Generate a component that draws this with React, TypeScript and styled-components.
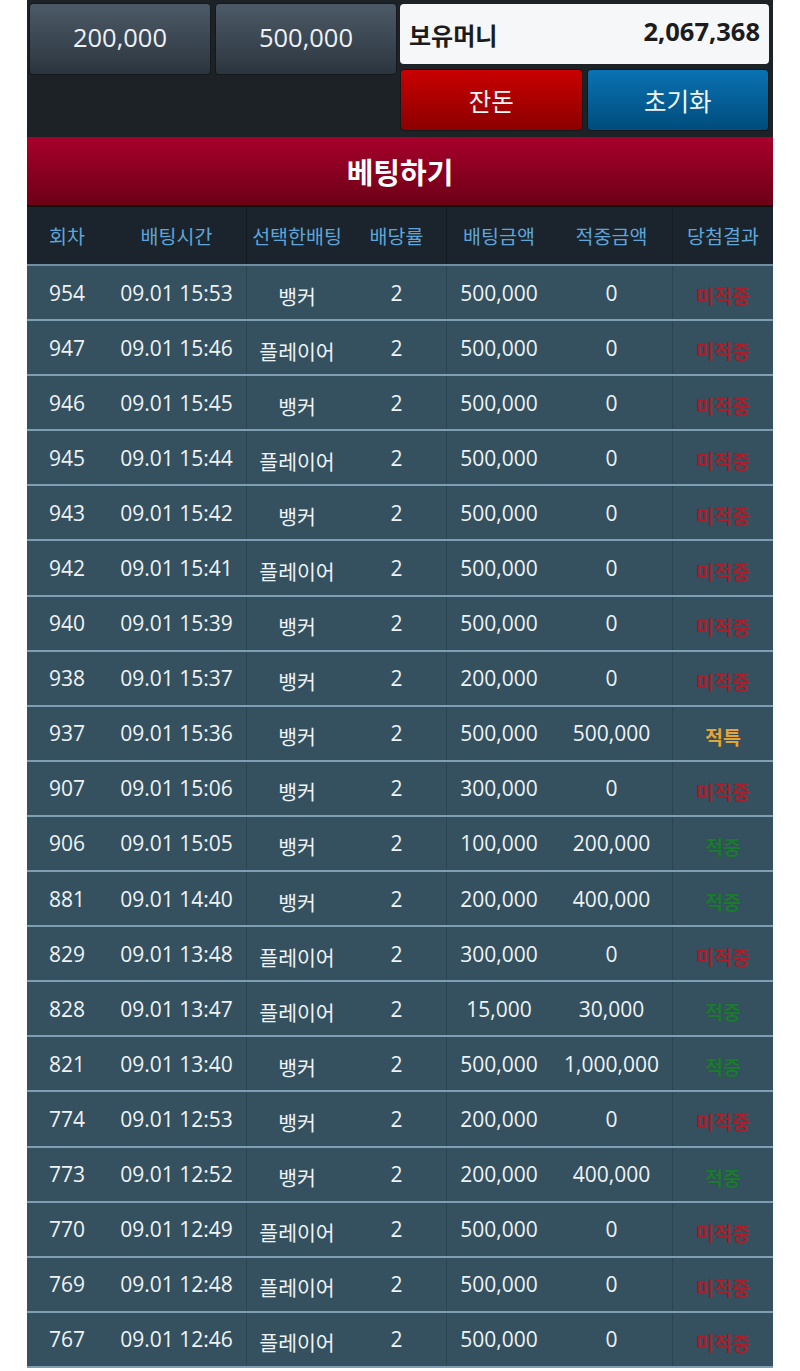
import React from "react";
import styled, { createGlobalStyle } from "styled-components";

const Global = createGlobalStyle`
  html, body { margin: 0; padding: 0; background: #ffffff; }
  body { font-family: "Open Sans", "Noto Sans CJK KR", sans-serif; }
  * { box-sizing: border-box; }
`;

const Page = styled.div`
  width: 746px;
  margin-left: 27px;
  background: #1d2226;
`;

const TopPanel = styled.div`
  display: flex;
  gap: 3px;
  padding: 3px 4px 6px 2px;
  height: 137px;
`;

const LeftGroup = styled.div`
  display: flex;
  gap: 4px;
  align-items: flex-start;
`;

const AmountButton = styled.div`
  width: 182px;
  height: 72px;
  border-radius: 4px;
  border: 1px solid #15191c;
  background: linear-gradient(#4c5a67, #2b353e);
  color: #eef2f5;
  font-size: 25.5px;
  display: flex;
  align-items: center;
  justify-content: center;
  padding-bottom: 5px;
  font-family: "Open Sans", sans-serif;
`;

const RightGroup = styled.div`
  flex: 1;
  display: flex;
  flex-direction: column;
  gap: 5px;
  padding-top: 1px;
`;

const BalanceBox = styled.div`
  height: 60px;
  border-radius: 4px;
  background: #f6f7f9;
  display: flex;
  align-items: center;
  justify-content: space-between;
  padding: 0 9px 0 9px;
  color: #1c1c1c;
  font-weight: 700;
`;

const BalanceLabel = styled.span`
  font-family: "Noto Sans CJK KR", sans-serif;
  font-size: 24px;
  font-weight: 700;
`;

const BalanceValue = styled.span`
  font-family: "Open Sans", sans-serif;
  font-size: 25.5px;
  font-weight: 700;
  margin-bottom: 6px;
`;

const ActionRow = styled.div`
  display: flex;
  gap: 4px;
`;

const ActionButton = styled.div<{ $tone: "red" | "blue" }>`
  flex: 1;
  height: 62px;
  border-radius: 4px;
  border: 1px solid #14181b;
  background: ${(p) =>
    p.$tone === "red"
      ? "linear-gradient(#c90000, #8c0000)"
      : "linear-gradient(#0a72b2, #004c7c)"};
  color: #f3f6f8;
  font-family: "Noto Sans CJK KR", sans-serif;
  font-size: 24.5px;
  display: flex;
  align-items: center;
  justify-content: center;
`;

const BetBar = styled.div`
  height: 70px;
  background: linear-gradient(#a8002b, #6c0017);
  border-bottom: 2px solid #140c0e;
  color: #ffffff;
  font-family: "Noto Sans CJK KR", sans-serif;
  font-size: 29px;
  font-weight: 700;
  display: flex;
  align-items: center;
  justify-content: center;
`;

const Table = styled.div`
  display: flex;
  flex-direction: column;
`;

const cols = "80px 140px 100px 100px 104px 122px 100px";

const HeadRow = styled.div`
  display: grid;
  grid-template-columns: ${cols};
  height: 59px;
  background: #1b242c;
  border-bottom: 2px solid #6f8ea3;
`;

const Row = styled.div`
  display: grid;
  grid-template-columns: ${cols};
  height: 55.1px;
  background: #35515f;
  border-bottom: 2px solid #7e9eb3;
`;

const Cell = styled.div<{ $sep?: boolean; $kr?: boolean }>`
  display: flex;
  align-items: center;
  justify-content: center;
  color: #eef3f6;
  font-size: ${(p) => (p.$kr ? "20.5px" : "21px")};
  font-family: ${(p) =>
    p.$kr ? '"Noto Sans CJK KR", sans-serif' : '"Open Sans", "Noto Sans CJK KR", sans-serif'};
  padding-top: ${(p) => (p.$kr ? "6px" : "0")};
  border-right: ${(p) => (p.$sep ? "1px solid #2c4350" : "none")};
  white-space: nowrap;
`;

const HeadCell = styled.div<{ $sep?: boolean }>`
  display: flex;
  align-items: center;
  justify-content: center;
  color: #5ea6da;
  font-size: 19.5px;
  font-family: "Noto Sans CJK KR", sans-serif;
  border-right: ${(p) => (p.$sep ? "1px solid #141b21" : "none")};
  white-space: nowrap;
`;

const ResultText = styled.span<{ $kind: string }>`
  font-family: "Noto Sans CJK KR", sans-serif;
  font-size: 19.5px;
  font-weight: 700;
  color: ${(p) =>
    p.$kind === "적특" ? "#e3a538" : p.$kind === "적중" ? "#1c7a30" : "#a8202b"};
  text-shadow: 0 0 1px rgba(0, 0, 0, 0.2);
`;

type Bet = [string, string, string, string, string, string];

const data: Bet[] = [
  ["954", "09.01 15:53", "뱅커", "500,000", "0", "미적중"],
  ["947", "09.01 15:46", "플레이어", "500,000", "0", "미적중"],
  ["946", "09.01 15:45", "뱅커", "500,000", "0", "미적중"],
  ["945", "09.01 15:44", "플레이어", "500,000", "0", "미적중"],
  ["943", "09.01 15:42", "뱅커", "500,000", "0", "미적중"],
  ["942", "09.01 15:41", "플레이어", "500,000", "0", "미적중"],
  ["940", "09.01 15:39", "뱅커", "500,000", "0", "미적중"],
  ["938", "09.01 15:37", "뱅커", "200,000", "0", "미적중"],
  ["937", "09.01 15:36", "뱅커", "500,000", "500,000", "적특"],
  ["907", "09.01 15:06", "뱅커", "300,000", "0", "미적중"],
  ["906", "09.01 15:05", "뱅커", "100,000", "200,000", "적중"],
  ["881", "09.01 14:40", "뱅커", "200,000", "400,000", "적중"],
  ["829", "09.01 13:48", "플레이어", "300,000", "0", "미적중"],
  ["828", "09.01 13:47", "플레이어", "15,000", "30,000", "적중"],
  ["821", "09.01 13:40", "뱅커", "500,000", "1,000,000", "적중"],
  ["774", "09.01 12:53", "뱅커", "200,000", "0", "미적중"],
  ["773", "09.01 12:52", "뱅커", "200,000", "400,000", "적중"],
  ["770", "09.01 12:49", "플레이어", "500,000", "0", "미적중"],
  ["769", "09.01 12:48", "플레이어", "500,000", "0", "미적중"],
  ["767", "09.01 12:46", "플레이어", "500,000", "0", "미적중"],
];

const headers = ["회차", "배팅시간", "선택한배팅", "배당률", "배팅금액", "적중금액", "당첨결과"];
const sepIdx = [1, 3, 5];

export default function App() {
  return (
    <>
      <Global />
      <Page>
        <TopPanel>
          <LeftGroup>
            <AmountButton>200,000</AmountButton>
            <AmountButton>500,000</AmountButton>
          </LeftGroup>
          <RightGroup>
            <BalanceBox>
              <BalanceLabel>보유머니</BalanceLabel>
              <BalanceValue>2,067,368</BalanceValue>
            </BalanceBox>
            <ActionRow>
              <ActionButton $tone="red">잔돈</ActionButton>
              <ActionButton $tone="blue">초기화</ActionButton>
            </ActionRow>
          </RightGroup>
        </TopPanel>
        <BetBar>베팅하기</BetBar>
        <Table>
          <HeadRow>
            {headers.map((h, i) => (
              <HeadCell key={h} $sep={sepIdx.includes(i)}>
                {h}
              </HeadCell>
            ))}
          </HeadRow>
          {data.map((r) => (
            <Row key={r[0]}>
              <Cell>{r[0]}</Cell>
              <Cell $sep>{r[1]}</Cell>
              <Cell $kr>{r[2]}</Cell>
              <Cell $sep>2</Cell>
              <Cell>{r[3]}</Cell>
              <Cell $sep>{r[4]}</Cell>
              <Cell $kr>
                <ResultText $kind={r[5]}>{r[5]}</ResultText>
              </Cell>
            </Row>
          ))}
        </Table>
      </Page>
    </>
  );
}
